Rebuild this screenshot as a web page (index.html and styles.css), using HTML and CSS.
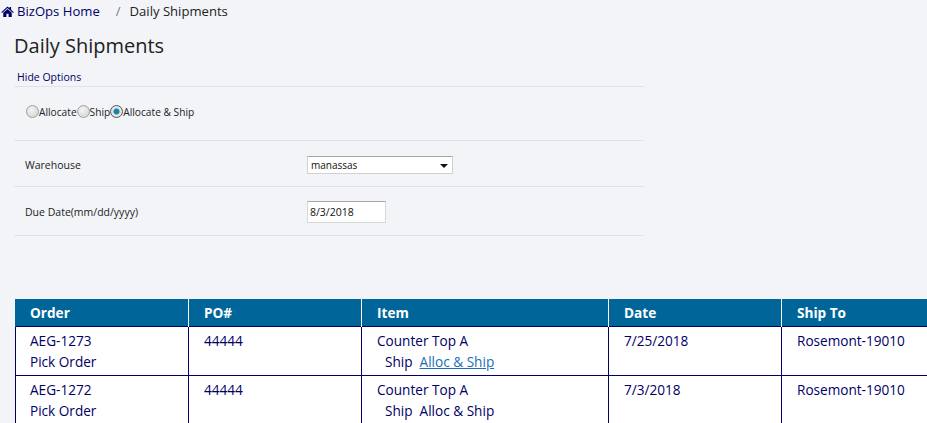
FILE: index.html
```html
<!DOCTYPE html>
<html lang="en">
<head>
    <meta charset="UTF-8">
    <title>Daily Shipments</title>
    <link rel="stylesheet" href="styles.css">
</head>
<body>

    <div class="breadcrumb">
        <svg class="home-icon" viewBox="0 0 16 14" width="13" height="11"><path d="M8 0.5 L10.6 2.9 V1.2 H12.6 V4.7 L16 7.8 L15 8.9 L8 2.6 L1 8.9 L0 7.8 Z M2.6 8.6 L8 3.8 L13.4 8.6 V14 H9.4 V10 H6.6 V14 H2.6 Z"/></svg>
        <a class="crumb-link" href="#">BizOps Home</a>
        <span class="crumb-sep">/</span>
        <span class="crumb-current">Daily Shipments</span>
    </div>

    <div class="content">
        <h1>Daily Shipments</h1>

        <div class="options">
            <div class="options-head"><a href="#">Hide Options</a></div>

            <!-- Mode -->
            <div class="option-row mode-row">
                <input type="radio" name="mode" id="m1"><label for="m1">Allocate</label>
                <input type="radio" name="mode" id="m2"><label for="m2">Ship</label>
                <input type="radio" name="mode" id="m3" checked><label for="m3">Allocate &amp; Ship</label>
            </div>

            <!-- Warehouse -->
            <div class="option-row field-row warehouse-row">
                <span class="field-label">Warehouse</span>
                <div class="select-box">manassas<span class="select-arrow"></span></div>
            </div>

            <!-- Due date -->
            <div class="option-row field-row date-row">
                <span class="field-label">Due Date(mm/dd/yyyy)</span>
                <input class="date-input" type="text" value="8/3/2018">
            </div>
        </div>

        <table class="orders">
            <colgroup>
                <col class="col-order">
                <col class="col-po">
                <col class="col-item">
                <col class="col-date">
                <col class="col-ship">
            </colgroup>
            <thead>
                <tr>
                    <th>Order</th>
                    <th>PO#</th>
                    <th>Item</th>
                    <th>Date</th>
                    <th>Ship To</th>
                </tr>
            </thead>
            <tbody>
                <tr>
                    <td><a href="#">AEG-1273</a><br><a href="#">Pick Order</a></td>
                    <td>44444</td>
                    <td>Counter Top A<br><span class="actions"><a href="#">Ship</a><a class="hovered" href="#">Alloc &amp; Ship</a></span></td>
                    <td>7/25/2018</td>
                    <td>Rosemont-19010</td>
                </tr>
                <tr>
                    <td><a href="#">AEG-1272</a><br><a href="#">Pick Order</a></td>
                    <td>44444</td>
                    <td>Counter Top A<br><span class="actions"><a href="#">Ship</a><a href="#">Alloc &amp; Ship</a></span></td>
                    <td>7/3/2018</td>
                    <td>Rosemont-19010</td>
                </tr>
            </tbody>
        </table>
    </div>

</body>
</html>
```

FILE: styles.css
```css
html, body {
    height: 100%;
    overflow: hidden;
}

body {
    font-family: "Open Sans", "Noto Sans", sans-serif;
    background-color: #f2f4f8;
    color: #222;
    margin: 0;
    padding: 0;
    font-size: 13px;
}

a {
    color: #000066;
    text-decoration: none;
}

.breadcrumb {
    display: flex;
    align-items: center;
    height: 22px;
    padding-left: 1px;
    font-size: 13.1px;
}

.home-icon {
    fill: #000066;
    margin-right: 3px;
}

.crumb-sep {
    color: #777;
    margin-left: 16px;
    margin-right: 9px;
}

.content {
    padding-left: 14px;
}

h1 {
    font-size: 20px;
    font-weight: 400;
    line-height: 28px;
    margin: 10px 0 0;
    color: #222;
}

.options {
    width: 630px;
    margin-top: 9px;
}

.options-head {
    height: 17px;
    line-height: 17px;
    padding-left: 3px;
    font-size: 10.5px;
    border-bottom: 1px solid #dfe2e8;
}

.option-row {
    font-size: 10.5px;
    border-bottom: 1px solid #dfe2e8;
    padding-left: 11px;
}

.mode-row {
    display: flex;
    align-items: flex-start;
    height: 53px;
    padding-left: 12px;
    font-size: 10.2px;
    line-height: 50px;
}

.mode-row input {
    appearance: none;
    box-sizing: border-box;
    width: 13px;
    height: 13px;
    margin: 18px 0 0;
    border: 1px solid #a0a0a0;
    border-radius: 50%;
    background: radial-gradient(circle at 40% 35%, #f4f4f4, #cfcfcf);
}

.mode-row input:checked {
    background: radial-gradient(circle, #1c7fa8 0 2.5px, #dfe6ea 3.5px);
    border-color: #555;
}

.field-row {
    display: flex;
    align-items: center;
}

.warehouse-row {
    height: 43px;
    padding-top: 2px;
}

.date-row {
    height: 47px;
    padding-top: 1px;
}

.field-label {
    width: 282px;
}

.select-box {
    position: relative;
    box-sizing: border-box;
    width: 146px;
    height: 18px;
    line-height: 16px;
    padding-left: 3px;
    font-size: 10px;
    background-color: white;
    border: 1px solid #d0d0d0;
    border-top-color: #a8a8a8;
    color: #111;
}

.select-arrow {
    position: absolute;
    right: 4px;
    top: 7px;
    border-left: 4px solid transparent;
    border-right: 4px solid transparent;
    border-top: 4px solid #111;
}

.date-input {
    box-sizing: border-box;
    width: 79px;
    height: 22px;
    padding: 0 2px;
    font-family: inherit;
    font-size: 10.5px;
    color: #111;
    background-color: white;
    border: 1px solid #d8d8d8;
    border-top-color: #a8a8a8;
    outline: none;
}

.orders {
    table-layout: fixed;
    border-collapse: collapse;
    width: 937px;
    margin-top: 63px;
    margin-left: 1px;
    background-color: white;
    font-size: 13.6px;
}

.col-order { width: 173px; }
.col-po { width: 173px; }
.col-item { width: 247px; }
.col-date { width: 173px; }
.col-ship { width: 171px; }

.orders th {
    background-color: #006699;
    color: white;
    font-weight: 700;
    text-align: left;
    height: 27px;
    padding: 0 0 0 15px;
    border-left: 1px solid white;
    border-right: 1px solid white;
}

.orders td {
    vertical-align: top;
    line-height: 21px;
    padding: 3px 0 3px 15px;
    color: #000066;
    border: 1px solid #000066;
}

.orders th:first-child {
    border-left-color: #006699;
    padding-left: 14px;
}

.orders td:first-child {
    padding-left: 14px;
}

.actions {
    padding-left: 8px;
}

.actions a {
    margin-right: 7px;
}

.actions a.hovered {
    color: #1a6fb5;
    text-decoration: underline;
}
```
